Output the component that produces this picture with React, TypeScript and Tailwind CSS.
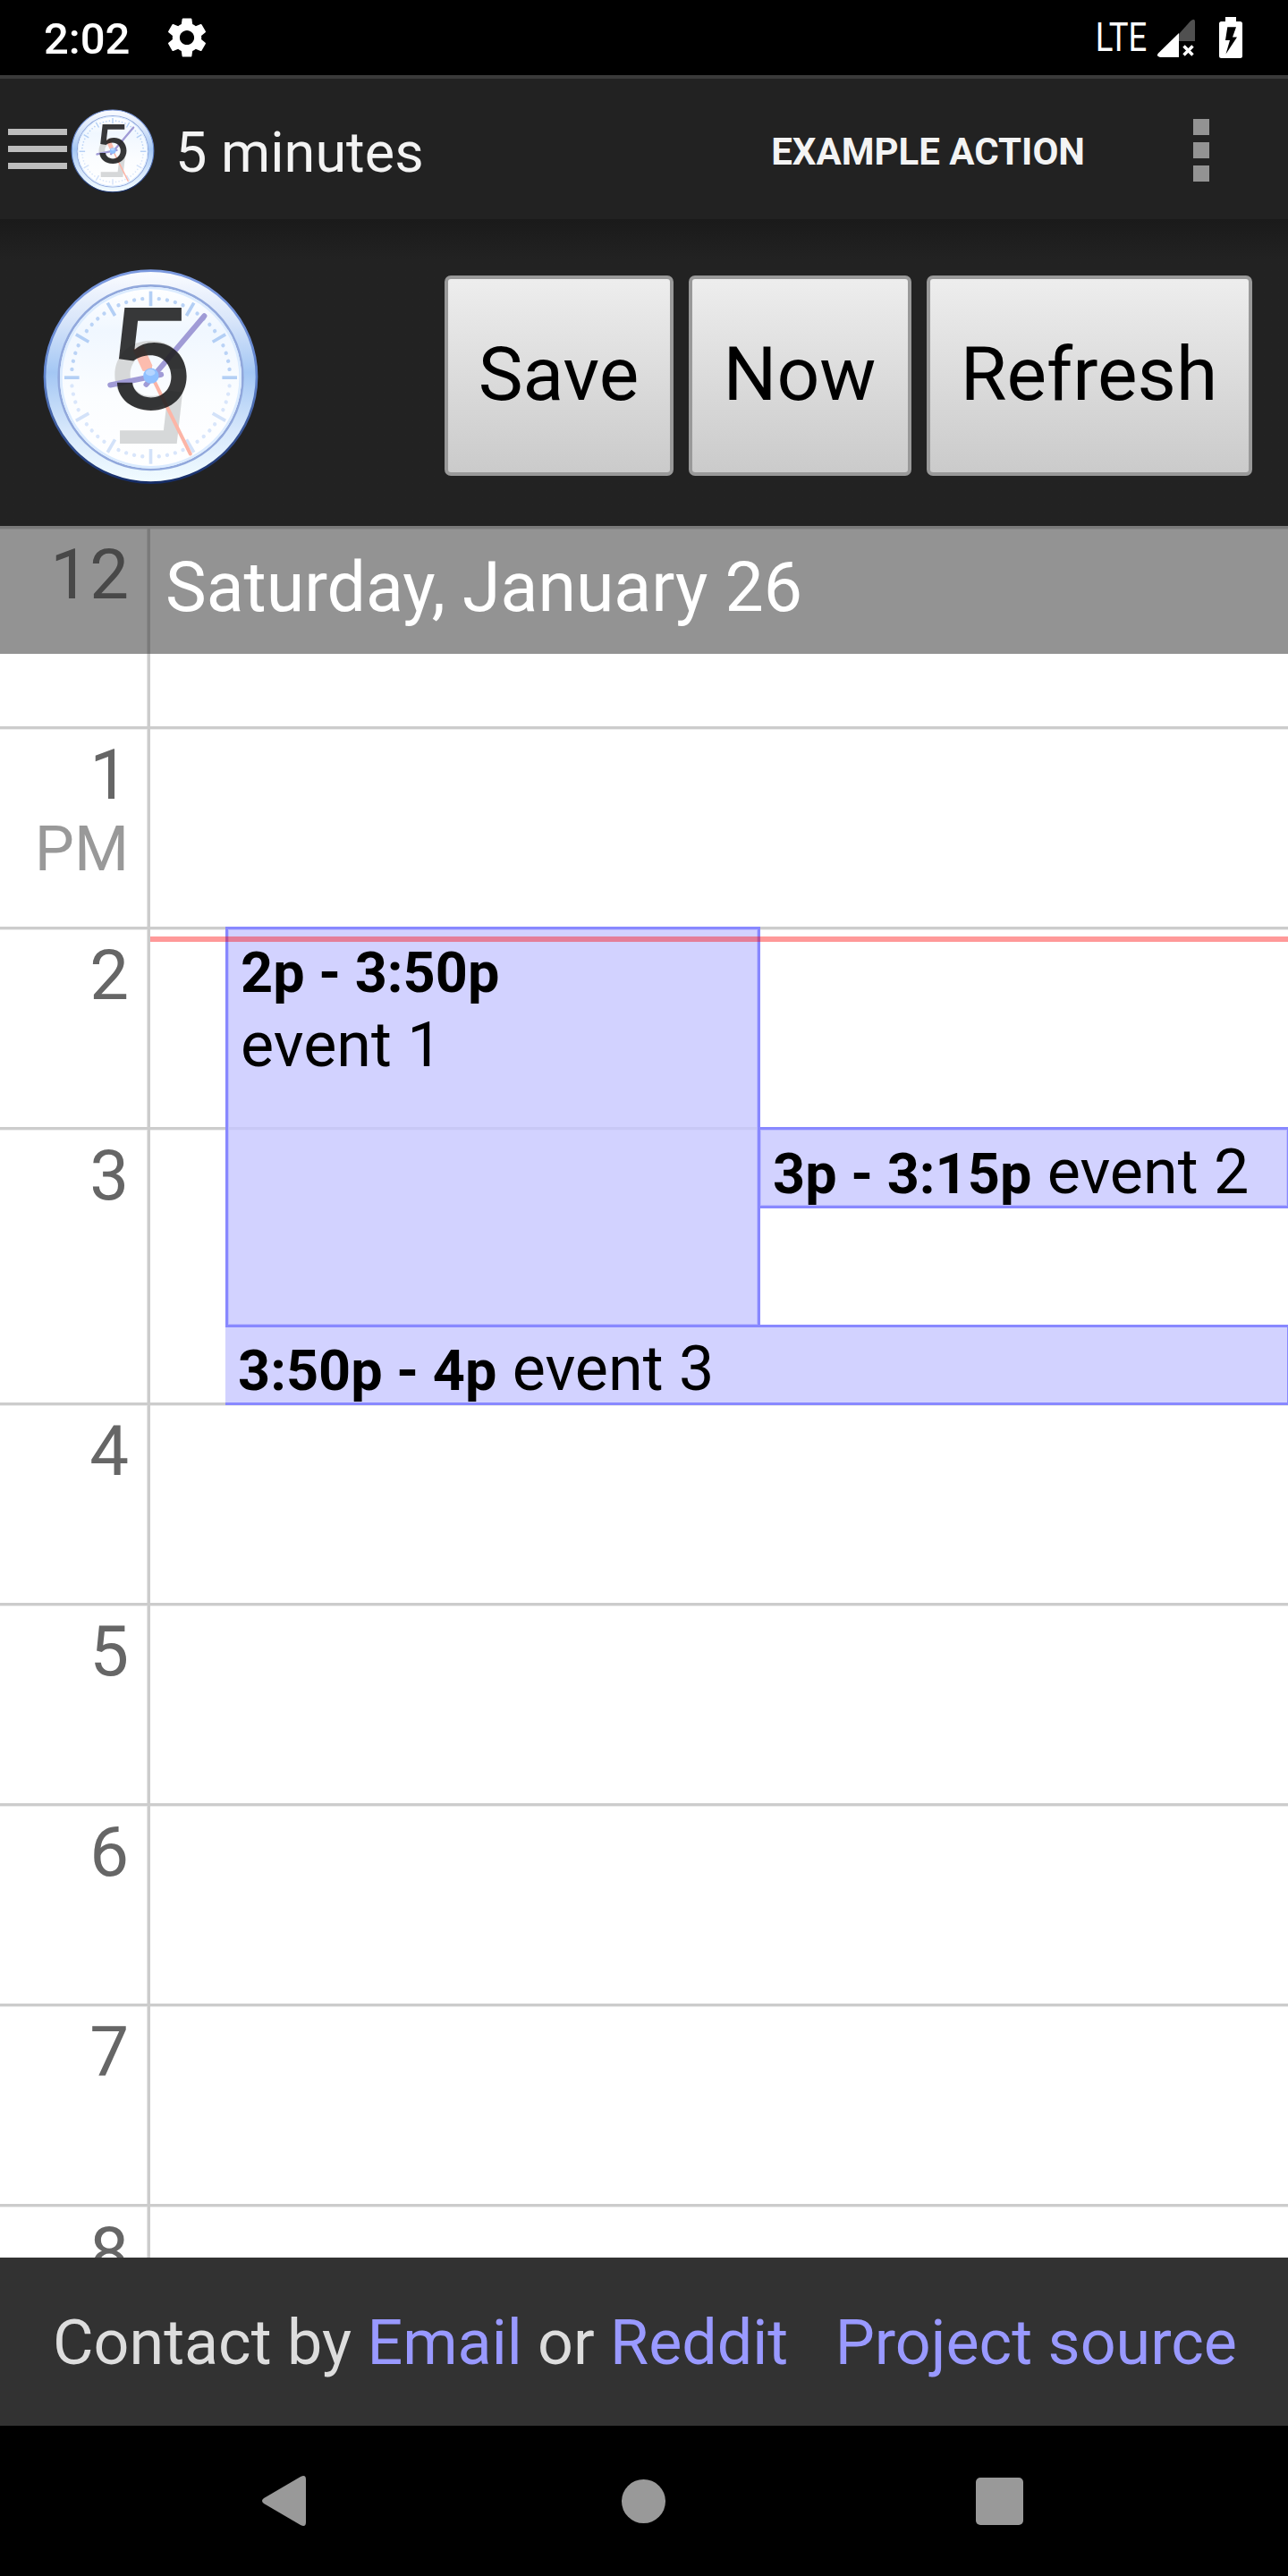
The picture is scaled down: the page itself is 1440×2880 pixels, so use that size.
import React, { useId } from "react";
import { MdSettings } from "react-icons/md";

const DEGREES = Array.from({ length: 60 }, (_, i) => i * 6);

function ClockLogo({ className }: { className: string }) {
  const id = useId();
  const rim = `${id}rim`;
  const face = `${id}face`;
  const edge = `${id}edge`;
  return (
    <svg className={className} viewBox="50 60 730 730" fill="none">
      <defs>
        <linearGradient id={rim} x1="0" y1="0" x2="0" y2="1">
          <stop offset="0" stopColor="#fbfcff" />
          <stop offset="0.22" stopColor="#dbe7fa" />
          <stop offset="0.48" stopColor="#a4c7f4" />
          <stop offset="0.75" stopColor="#d6e7fb" />
          <stop offset="1" stopColor="#f2fcff" />
        </linearGradient>
        <linearGradient id={face} x1="0" y1="0" x2="0" y2="1">
          <stop offset="0" stopColor="#ffffff" />
          <stop offset="0.25" stopColor="#f0f7ff" />
          <stop offset="0.6" stopColor="#fbfdff" />
          <stop offset="1" stopColor="#ffffff" />
        </linearGradient>
        <linearGradient id={edge} x1="0" y1="0" x2="0" y2="1">
          <stop offset="0" stopColor="#7c9ae0" />
          <stop offset="0.5" stopColor="#5f83cc" />
          <stop offset="1" stopColor="#152c66" />
        </linearGradient>
      </defs>
      <circle cx="415" cy="424" r="356" fill={`url(#${rim})`} stroke={`url(#${edge})`} strokeWidth="8" />
      <circle cx="415" cy="427" r="309" fill={`url(#${face})`} stroke="#91a8dc" strokeWidth="8" />
      <circle cx="415" cy="427" r="301" stroke="#dcecff" strokeWidth="8" />
      {DEGREES.map((d) =>
        d % 30 === 0 ? (
          <line
            key={d}
            x1="415"
            y1="137"
            x2="415"
            y2="187"
            stroke={d > 90 && d < 270 ? "#d3e2f9" : "#b3cff5"}
            strokeWidth="11"
            transform={`rotate(${d} 415 427)`}
          />
        ) : (
          <circle
            key={d}
            cx="415"
            cy="161"
            r="6.5"
            fill={d > 90 && d < 270 ? "#d9e6fb" : "#bad3f6"}
            transform={`rotate(${d} 415 427)`}
          />
        ),
      )}
      <text
        fontFamily="Inter, sans-serif"
        fontSize="466"
        fontWeight="500"
        fill="#d6d8d9"
        transform="rotate(180 415 421) translate(268 532) scale(1.02 1)"
      >
        5
      </text>
      <path d="M355 333 390 318 420 385 418 410 388 405Z" fill="#fcbcae" />
      <path d="M425 435 548 683" stroke="#fcb5a6" strokeWidth="12" strokeLinecap="round" />
      <path d="M279 452 450 417M400 450 595 220" stroke="#a09bd6" strokeWidth="18" strokeLinecap="round" />
      <text
        fontFamily="Inter, sans-serif"
        fontSize="466"
        fontWeight="500"
        fill="#1c1d1e"
        fillOpacity="0.88"
        transform="translate(268 532) scale(1.02 1)"
      >
        5
      </text>
      <circle cx="416" cy="421" r="26" fill="#8fc0ff" />
      <ellipse cx="414" cy="410" rx="16" ry="11" fill="#b5d5ff" />
    </svg>
  );
}

function StatusBar() {
  return (
    <div className="flex h-[84px] items-start bg-black text-white">
      <span className="ml-[49px] mt-[12px] w-[133px] text-[49px] font-medium leading-[64px]">2:02</span>
      <MdSettings className="mt-[15px] size-[54px]" />
      <span className="ml-auto mr-[9px] mt-[15px] flex w-[60px] justify-center text-[44px] leading-[54px]">
        <span className="scale-x-[0.83]">LTE</span>
      </span>
      <svg className="mr-[26px] mt-[20px] h-[46px] w-[44px]" viewBox="1293 20 44 46">
        <path d="M1318 38 1331 23.500Q1336 19.500 1336 25V46H1318Z" fill="#505050" />
        <path d="M1318 37V64H1297Q1292 63 1295 59.500Z" fill="#fff" />
        <path d="M1323.500 51.500 1333.500 61.500M1333.500 51.500 1323.500 61.500" stroke="#fff" strokeWidth="3.500" />
      </svg>
      <svg className="mr-[51px] mt-[19px] h-[46px] w-[26px]" viewBox="1363 19 26 46">
        <path
          fillRule="evenodd"
          fill="#fff"
          d="M1370 19h12v5h4.500q2.500 0 2.500 2.500v36q0 2.500-2.500 2.500h-21q-2.500 0-2.500-2.500v-36q0-2.500 2.500-2.500h4.500ZM1372.300 30.300 1370 45h5l-4.500 15.500L1383 41.500h-5L1382 30.300Z"
        />
      </svg>
    </div>
  );
}

function ActionBar() {
  return (
    <div className="flex h-[161px] items-start border-t-4 border-[#3a3a3a] bg-[#222] text-[#f3f3f3]">
      <div className="ml-[9px] mt-[56px] flex w-[66px] flex-col gap-[12px]">
        <div className="h-[7px] bg-[#bdbdbd]" />
        <div className="h-[7px] bg-[#bdbdbd]" />
        <div className="h-[7px] bg-[#bdbdbd]" />
      </div>
      <ClockLogo className="ml-[4px] mt-[34px] size-[94px]" />
      <h1 className="ml-[23px] mt-[43px] text-[63px] leading-[80px]">5 minutes</h1>
      <span className="ml-auto mt-[56px] text-[42px] font-bold leading-[52px]">EXAMPLE ACTION</span>
      <div className="ml-[121px] mr-[88px] mt-[45px] flex w-[18px] flex-col gap-[8px]">
        <div className="h-[18px] bg-[#939393]" />
        <div className="h-[18px] bg-[#939393]" />
        <div className="h-[18px] bg-[#939393]" />
      </div>
    </div>
  );
}

function ToolButton({ label, className }: { label: string; className: string }) {
  return (
    <button
      className={`h-[224px] rounded-[7px] border-4 border-[#999] bg-linear-to-b from-[#eee] to-[#cacaca] bg-origin-border pb-[2px] pr-[1px] text-center text-[84px] leading-[100px] text-black ${className}`}
    >
      {label}
    </button>
  );
}

function Toolbar() {
  return (
    <div className="h-[343px] bg-[#222]">
      <div className="flex h-full items-start bg-linear-to-b from-[#1a1a1a] to-[#222] to-[45px]">
        <ClockLogo className="ml-[47px] mt-[55px] size-[243px]" />
        <div className="ml-auto mr-[40px] mt-[63px] flex gap-[17px]">
          <ToolButton label="Save" className="w-[256px]" />
          <ToolButton label="Now" className="w-[249px]" />
          <ToolButton label="Refresh" className="w-[364px]" />
        </div>
      </div>
    </div>
  );
}

const HOURS = [
  { label: "12", height: "h-[224px]" },
  { label: "1", suffix: "PM", height: "h-[224px]" },
  { label: "2", height: "h-[224px]" },
  { label: "3", height: "h-[308px]" },
  { label: "4", height: "h-[224px]" },
  { label: "5", height: "h-[224px]" },
  { label: "6", height: "h-[224px]" },
  { label: "7", height: "h-[224px]" },
  { label: "8", height: "h-[224px]" },
];

function EventCard({
  time,
  title,
  stacked,
  className,
}: {
  time: string;
  title: string;
  stacked?: boolean;
  className: string;
}) {
  return (
    <div
      className={`absolute overflow-hidden whitespace-nowrap border-[#8888ff] bg-[rgba(199,199,255,0.8)] bg-clip-padding text-[70px] text-black ${className}`}
    >
      <b className="text-[63px] font-bold">{time}</b>
      {stacked ? <br /> : " "}
      {title}
    </div>
  );
}

function Calendar() {
  return (
    <div className="relative h-[1936px] overflow-hidden bg-white">
      {HOURS.map((h) => (
        <div
          key={h.label}
          className={`flex border-t-[3px] border-[#ccc] shadow-[inset_0_1px_0_0_#ededed] ${h.height}`}
        >
          <div className="w-[168px] border-r-[3px] border-[#ccc] pr-[21px] pt-[10px] text-right text-[78px] leading-[84px] text-[#666] shadow-[inset_-1px_0_0_0_#e4e4e4]">
            {h.label}
            {h.suffix && <div className="text-[70px] leading-[80px] text-[#999]">{h.suffix}</div>}
          </div>
        </div>
      ))}
      <EventCard
        time="2p - 3:50p"
        title="event 1"
        stacked
        className="left-[252px] top-[448px] h-[448px] w-[598px] border-[3px] pl-[14px] pt-[6px] leading-[81px] shadow-[inset_0_0_0_1px_#bcbcff]"
      />
      <EventCard
        time="3p - 3:15p"
        title="event 2"
        className="left-[850px] right-0 top-[672px] h-[91px] border-y-[3px] border-r pl-[14px] pt-[6px] leading-[82px] shadow-[inset_0_0_0_1px_#bcbcff]"
      />
      <EventCard
        time="3:50p - 4p"
        title="event 3"
        className="left-[252px] right-0 top-[893px] h-[90px] border-y-[3px] border-r pl-[14px] pt-[5px] leading-[82px]"
      />
      <div className="absolute left-[168px] right-0 top-[459px] h-[6px] bg-[rgba(255,0,0,0.4)]" />
      <div className="absolute inset-x-0 top-0 h-[143px] bg-[rgba(45,45,45,0.515)] pl-[185px] pt-[27px] text-[77px] leading-[84px] text-white">
        Saturday, January 26
      </div>
    </div>
  );
}

function Footer() {
  return (
    <div className="flex h-[188px] items-start bg-[#323232] pl-[59px] pt-[53px] text-[70px] leading-[84px] text-[#ddd]">
      <span className="whitespace-pre">
        Contact by <a className="text-[#9999ff]">Email</a> or <a className="text-[#9999ff]">Reddit</a>
      </span>
      <a className="ml-auto mr-[57px] text-[#9999ff]">Project source</a>
    </div>
  );
}

function NavBar() {
  return (
    <div className="flex h-[168px] items-center bg-black pl-[293px]">
      <svg className="h-[56px] w-[49px]" viewBox="0 0 49 56">
        <path d="M43 1Q49-2 49 4V52Q49 58 43 55L2 31Q-2 28 2 25Z" fill="#999" />
      </svg>
      <div className="ml-[353px] size-[49px] rounded-full bg-[#999]" />
      <div className="ml-[347px] size-[53px] rounded-[5px] bg-[#999]" />
    </div>
  );
}

export default function App() {
  return (
    <div className="flex h-[2880px] w-[1440px] flex-col overflow-hidden bg-black font-[Roboto,sans-serif]">
      <StatusBar />
      <ActionBar />
      <Toolbar />
      <Calendar />
      <Footer />
      <NavBar />
    </div>
  );
}
